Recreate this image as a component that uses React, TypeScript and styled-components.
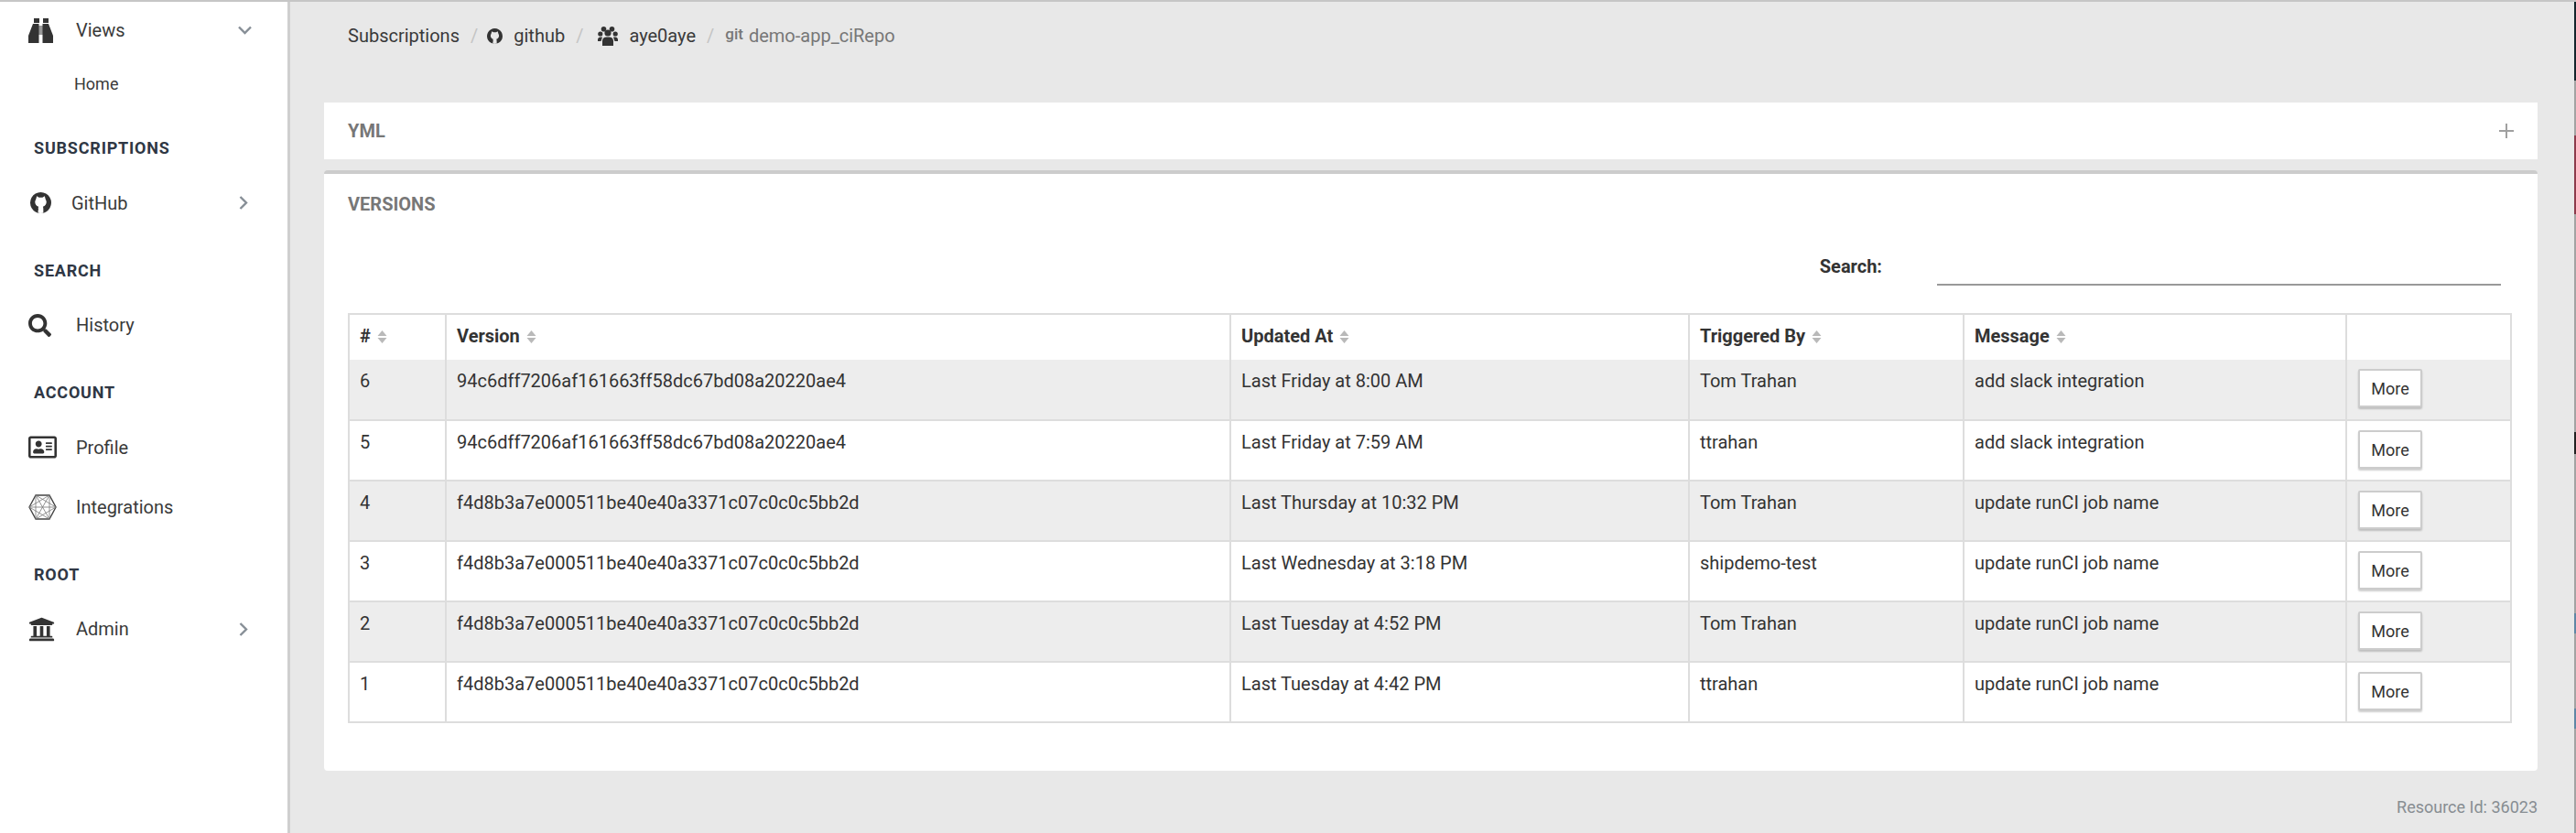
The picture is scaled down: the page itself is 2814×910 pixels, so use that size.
import React, { FC, PropsWithChildren } from 'react';
import styled, { createGlobalStyle } from 'styled-components';
import { FaRegAddressCard, FaSearch, FaUniversity } from 'react-icons/fa';

const GlobalStyle = createGlobalStyle`
	html, body {
		margin: 0;
		padding: 0;
		background: #e8e8e8;
		font-family: Roboto, "Liberation Sans", sans-serif;
		color: #333;
	}
`;

const Page = styled.div`
	display: flex;
	width: 2814px;
	height: 910px;
	overflow: hidden;
	box-sizing: border-box;
	border-top: 2px solid #c6c6c6;
`;

const Sidebar = styled.nav`
	width: 314px;
	flex: none;
	box-sizing: content-box;
	background: #fff;
	border-right: 3px solid #cfcfcf;
	padding-top: 11px;
`;

const NavRow = styled.div<{ $gap?: number }>`
	display: flex;
	align-items: center;
	height: 40px;
	margin-top: ${(p) => p.$gap ?? 0}px;
	padding-left: 31px;
	font-size: 20px;
	color: #3a3a3a;
`;

const NavIcon = styled.span<{ $width: number; $inset?: number }>`
	display: flex;
	align-items: center;
	box-sizing: border-box;
	width: ${(p) => p.$width}px;
	padding-left: ${(p) => p.$inset ?? 0}px;
	flex: none;
	color: #333;
`;

const NavCaret = styled.svg<{ $right: number }>`
	margin-left: auto;
	margin-right: ${(p) => p.$right}px;
	fill: none;
	stroke: #868e96;
	stroke-width: 2.4;
`;

const SubRow = styled.div`
	height: 32px;
	line-height: 32px;
	margin-top: 23px;
	padding-left: 81px;
	font-size: 18px;
	color: #3a3a3a;
`;

const SectionTitle = styled.div`
	height: 40px;
	line-height: 40px;
	margin: 34px 0 19.5px;
	padding-left: 37px;
	font-size: 18px;
	font-weight: 700;
	letter-spacing: 0.8px;
	color: #2f3744;
`;

const Main = styled.main`
	flex: 1;
	min-width: 0;
	padding: 0 40px 0 37px;
`;

const Breadcrumbs = styled.div`
	display: flex;
	align-items: center;
	height: 110px;
	padding: 0 26px 36px;
	box-sizing: border-box;
	font-size: 20px;
	color: #3a3a3a;
`;

const Crumb = styled.span`
	display: flex;
	align-items: center;
	gap: 12px;
`;

const Slash = styled.span<{ $after: number }>`
	margin: 0 ${(p) => p.$after}px 0 12px;
	color: #c4c4c4;
`;

const CrumbCurrent = styled.span`
	color: #777;
`;

const GitTag = styled.span`
	position: relative;
	top: -3px;
	margin-right: 6px;
	font-size: 17px;
	font-weight: 500;
`;

const CollapsedCard = styled.section`
	display: flex;
	align-items: center;
	justify-content: space-between;
	height: 62px;
	padding: 0 26px;
	background: #fff;
`;

const CardTitle = styled.h2`
	margin: 0;
	font-size: 20px;
	font-weight: 700;
	color: #777;
`;

const Card = styled.section`
	margin-top: 12px;
	height: 656px;
	box-sizing: border-box;
	padding: 0 29px 0 26px;
	background: #fff;
	border-top: 4px solid #ccc;
	border-radius: 4px;
`;

const CardHead = styled.div`
	display: flex;
	align-items: center;
	height: 66px;
`;

const SearchRow = styled.div`
	display: flex;
	align-items: flex-end;
	justify-content: flex-end;
	height: 56px;
	margin-bottom: 30px;
	padding-right: 11px;
`;

const SearchLabel = styled.label`
	align-self: flex-start;
	margin-top: 23px;
	margin-right: 60px;
	font-size: 20px;
	font-weight: 700;
	color: #333;
`;

const SearchInput = styled.input`
	width: 616px;
	height: 36px;
	box-sizing: border-box;
	padding: 0;
	border: 0;
	border-bottom: 2px solid #999;
	outline: none;
	background: transparent;
`;

const Table = styled.table`
	width: 2362px;
	table-layout: fixed;
	border-collapse: collapse;
	border: 2px solid #ddd;
	font-size: 20px;
`;

const HeadCell = styled.th`
	height: 50px;
	padding: 0 11px 3px;
	box-sizing: border-box;
	border-left: 2px solid #ddd;
	text-align: left;
	font-weight: 700;
	color: #333;
	white-space: nowrap;
`;

const BodyRow = styled.tr<{ $striped: boolean }>`
	background: ${(p) => (p.$striped ? '#ededed' : '#fff')};
	border-bottom: 2px solid #ddd;
`;

const BodyCell = styled.td`
	height: 66px;
	padding: 11px 11px 0;
	box-sizing: border-box;
	border-left: 2px solid #ddd;
	vertical-align: top;
	line-height: 24px;
	color: #333;
	white-space: nowrap;
`;

const ActionCell = styled(BodyCell)`
	padding: 10px 0 0 12px;
`;

const MoreButton = styled.button`
	display: block;
	width: 70px;
	height: 42px;
	padding: 0;
	background: #fff;
	border: 2px solid #ccc;
	border-radius: 2px;
	box-shadow: 0 2px 2px rgba(0, 0, 0, 0.2);
	font-family: inherit;
	font-size: 18px;
	color: #333;
`;

const SortMark = styled.svg`
	margin-left: 7px;
	vertical-align: -1px;
`;

const Footer = styled.div`
	height: 80px;
	line-height: 80px;
	text-align: right;
	font-size: 18px;
	color: #878d92;
`;

// the edge of the next window shows through along the right side
const WindowEdge = styled.div`
	width: 2px;
	flex: none;
	background: linear-gradient(
		to bottom,
		#14252c 0 86px,
		#a3a3a3 86px 146px,
		#8d3b4c 146px 232px,
		#a3a3a3 232px 470px,
		#222 470px 494px,
		#a3a3a3 494px 668px,
		#5f87a5 668px 690px,
		#a3a3a3 690px 772px,
		#5f87a5 772px 794px,
		#a3a3a3 794px
	);
`;

const SortIcon: FC = () => (
	<SortMark width="11" height="14" viewBox="0 0 11 14">
		<path d="M5.5 0 L10.5 6 H0.5 Z M0.5 8 H10.5 L5.5 14 Z" fill="#b9b9b9" />
	</SortMark>
);

const BinocularsIcon: FC = () => (
	<svg width="27" height="27" viewBox="0 0 27 27" fill="#333">
		<rect x="6" y="0" width="6" height="5" />
		<rect x="16" y="0" width="6" height="5" />
		<rect x="11" y="8" width="5" height="10" fill="#999" />
		<path d="M5 6 H11.5 V27 H0 V19 Z" />
		<path d="M15.5 6 H22 L27 19 V27 H15.5 Z" />
	</svg>
);

const GithubIcon: FC<{ size: number }> = ({ size }) => (
	<svg width={size} height={size} viewBox="0 0 24 24" fill="#333">
		<path
			fillRule="evenodd"
			d="M12 0 A12 12 0 1 1 11.99 0 Z M7.5 4.5 L10 6 H14 L16.5 4.5 L17.5 8 C19.5 11 18.5 15.5 14.5 16.5 C15 17.5 15 19 15 23.6 A12 12 0 0 1 9 23.6 C9 21 9 18 9.5 16.5 C5.5 15.5 4.5 11 6.5 8 Z"
		/>
		<path d="M4 17 C6 20 7.5 19.5 9.2 19.5" fill="none" stroke="#333" strokeWidth="1.6" />
	</svg>
);

const UsersIcon: FC = () => (
	<svg width="22" height="21" viewBox="0 0 22 21" fill="#333">
		<circle cx="6.5" cy="2.8" r="2.8" />
		<circle cx="15.5" cy="2.8" r="2.8" />
		<circle cx="11" cy="7" r="3.6" />
		<circle cx="2.8" cy="8" r="2.6" />
		<circle cx="19.2" cy="8" r="2.6" />
		<path d="M5 21 V15.5 A4.5 4.5 0 0 1 9.5 11.5 H12.5 A4.5 4.5 0 0 1 17 15.5 V21 Z" />
		<path d="M0 15 A3 3 0 0 1 3 11.5 H5 L3.5 16 H0 Z M22 15 A3 3 0 0 0 19 11.5 H17 L18.5 16 H22 Z" />
	</svg>
);

const HexIcon: FC = () => (
	<svg width="31" height="28" viewBox="0 0 31 28" fill="none" stroke="#777" strokeWidth="0.8">
		<path d="M1 14 L8 1 H23 L30 14 L23 27 H8 Z" stroke="#444" strokeWidth="1.4" />
		<path d="M8 1 L23 27 M23 1 L8 27 M1 14 H30 M8 1 L30 14 M23 1 L1 14 M8 27 L30 14 M23 27 L1 14 M8 1 V27 M23 1 V27" />
	</svg>
);

const CaretDown: FC = () => (
	<NavCaret $right={39} width="15" height="10" viewBox="0 0 15 10">
		<path d="M1 1.5 L7.5 8 L14 1.5" />
	</NavCaret>
);

const CaretRight: FC = () => (
	<NavCaret $right={43} width="10" height="15" viewBox="0 0 10 15">
		<path d="M1.5 1 L8 7.5 L1.5 14" />
	</NavCaret>
);

interface INavItemProps extends PropsWithChildren {
	icon: React.ReactNode;
	iconWidth: number;
	iconInset?: number;
	caret?: React.ReactNode;
	gap?: number;
}

const NavItem: FC<INavItemProps> = ({ icon, iconWidth, iconInset, caret, gap, children }) => (
	<NavRow $gap={gap}>
		<NavIcon $width={iconWidth} $inset={iconInset}>{icon}</NavIcon>
		{children}
		{caret}
	</NavRow>
);

const versions = [
	['6', '94c6dff7206af161663ff58dc67bd08a20220ae4', 'Last Friday at 8:00 AM', 'Tom Trahan', 'add slack integration'],
	['5', '94c6dff7206af161663ff58dc67bd08a20220ae4', 'Last Friday at 7:59 AM', 'ttrahan', 'add slack integration'],
	['4', 'f4d8b3a7e000511be40e40a3371c07c0c0c5bb2d', 'Last Thursday at 10:32 PM', 'Tom Trahan', 'update runCI job name'],
	['3', 'f4d8b3a7e000511be40e40a3371c07c0c0c5bb2d', 'Last Wednesday at 3:18 PM', 'shipdemo-test', 'update runCI job name'],
	['2', 'f4d8b3a7e000511be40e40a3371c07c0c0c5bb2d', 'Last Tuesday at 4:52 PM', 'Tom Trahan', 'update runCI job name'],
	['1', 'f4d8b3a7e000511be40e40a3371c07c0c0c5bb2d', 'Last Tuesday at 4:42 PM', 'ttrahan', 'update runCI job name']
];

const columns = [
	{ title: '#', width: 106 },
	{ title: 'Version', width: 857 },
	{ title: 'Updated At', width: 501 },
	{ title: 'Triggered By', width: 300 },
	{ title: 'Message', width: 418 },
	{ title: '', width: 180 }
];

const App: FC = () => (
	<Page>
		<GlobalStyle />
		<Sidebar>
			<NavItem icon={<BinocularsIcon />} iconWidth={52} caret={<CaretDown />}>Views</NavItem>
			<SubRow>Home</SubRow>
			<SectionTitle>SUBSCRIPTIONS</SectionTitle>
			<NavItem icon={<GithubIcon size={23} />} iconWidth={47} iconInset={2} caret={<CaretRight />}>GitHub</NavItem>
			<SectionTitle>SEARCH</SectionTitle>
			<NavItem icon={<FaSearch size={25} />} iconWidth={52}>History</NavItem>
			<SectionTitle>ACCOUNT</SectionTitle>
			<NavItem icon={<FaRegAddressCard size={31} />} iconWidth={52}>Profile</NavItem>
			<NavItem icon={<HexIcon />} iconWidth={52} gap={25}>Integrations</NavItem>
			<SectionTitle>ROOT</SectionTitle>
			<NavItem icon={<FaUniversity size={29} />} iconWidth={52} caret={<CaretRight />}>Admin</NavItem>
		</Sidebar>
		<Main>
			<Breadcrumbs>
				<Crumb>Subscriptions</Crumb>
				<Slash $after={10}>/</Slash>
				<Crumb><GithubIcon size={17} />github</Crumb>
				<Slash $after={16}>/</Slash>
				<Crumb><UsersIcon />aye0aye</Crumb>
				<Slash $after={12}>/</Slash>
				<CrumbCurrent><GitTag>git</GitTag>demo-app_ciRepo</CrumbCurrent>
			</Breadcrumbs>
			<CollapsedCard>
				<CardTitle>YML</CardTitle>
				<svg width="16" height="16" viewBox="0 0 16 16" stroke="#a0a0a0" strokeWidth="2">
					<path d="M0 8 H16 M8 0 V16" />
				</svg>
			</CollapsedCard>
			<Card>
				<CardHead><CardTitle>VERSIONS</CardTitle></CardHead>
				<SearchRow>
					<SearchLabel>Search:</SearchLabel>
					<SearchInput type="text" />
				</SearchRow>
				<Table>
					<colgroup>
						{columns.map((c, i) => <col key={i} width={c.width} />)}
					</colgroup>
					<thead>
						<tr>
							{columns.map((c, i) => (
								<HeadCell key={i}>
									{c.title}
									{c.title && <SortIcon />}
								</HeadCell>
							))}
						</tr>
					</thead>
					<tbody>
						{versions.map((row, i) => (
							<BodyRow key={row[0]} $striped={i % 2 === 0}>
								{row.map((cell, j) => <BodyCell key={j}>{cell}</BodyCell>)}
								<ActionCell><MoreButton>More</MoreButton></ActionCell>
							</BodyRow>
						))}
					</tbody>
				</Table>
			</Card>
			<Footer>Resource Id: 36023</Footer>
		</Main>
		<WindowEdge />
	</Page>
);

export default App;
